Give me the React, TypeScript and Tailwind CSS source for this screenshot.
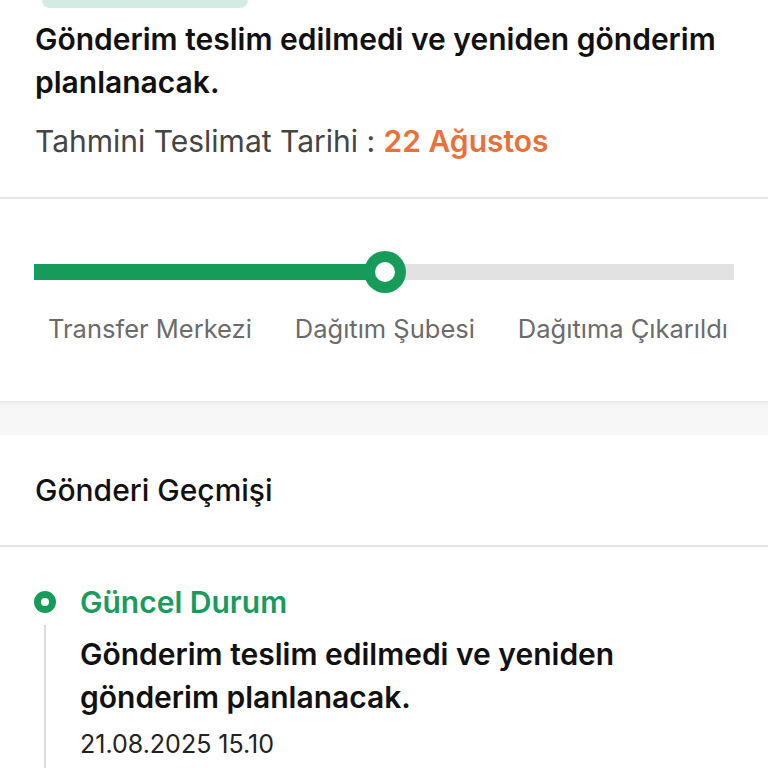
import React from "react";

export default function App() {
  return (
    <div className="w-[768px] h-[768px] overflow-hidden bg-white font-['Inter','Noto_Sans',sans-serif]">
      {/* Top section */}
      <div className="px-[35px] pb-[38px]">
        <div className="ml-[7px] w-[206px] h-[8px] rounded-b-[10px] bg-[#d3ece1]" />
        <h1 className="mt-[10px] text-[30px] leading-[43px] font-semibold text-[#111111]">
          Gönderim teslim edilmedi ve yeniden gönderim planlanacak.
        </h1>
        <p className="mt-[19px] text-[30px] leading-[36px] text-[#444444]">
          Tahmini Teslimat Tarihi :{" "}
          <span className="font-semibold text-[#e8703a]">22 Ağustos</span>
        </p>
      </div>
      <div className="h-[2px] bg-[#e6e6e6]" />

      {/* Progress section */}
      <div className="px-[34px] pt-[52px] h-[202px]">
        <div className="relative w-[700px] h-[42px] flex items-center">
          <div className="w-[350px] h-[16px] bg-[#169c58]" />
          <div className="flex-1 h-[16px] bg-[#e2e2e2]" />
          <div className="absolute left-[330px] top-0 w-[42px] h-[42px] rounded-full bg-[#169c58] flex items-center justify-center">
            <div className="w-[20px] h-[20px] rounded-full bg-white" />
          </div>
        </div>
        <div className="mt-[21px] pl-[14px] pr-[6px] flex justify-between text-[25.5px] leading-[30px] text-[#6b6b6b]">
          <div>Transfer Merkezi</div>
          <div>Dağıtım Şubesi</div>
          <div>Dağıtıma Çıkarıldı</div>
        </div>
      </div>

      {/* Gap */}
      <div className="h-[34px] bg-[#f7f7f7] shadow-[inset_0_7px_6px_-5px_rgba(0,0,0,0.07)]" />

      {/* History card */}
      <div className="bg-white">
        <div className="h-[110px] px-[35px] flex items-center">
          <h2 className="text-[30px] font-medium text-[#111111]">Gönderi Geçmişi</h2>
        </div>
        <div className="h-[2px] bg-[#e3e3e3]" />
        <div className="px-[34px] pt-[38px] flex gap-[24px]">
          <div className="flex flex-col items-center w-[22px] shrink-0">
            <div className="mt-[6px] w-[22px] h-[22px] rounded-full border-[7px] border-[#169c58]" />
            <div className="mt-[12px] w-[2px] h-[200px] bg-[#dcdcdc]" />
          </div>
          <div className="flex-1">
            <div className="text-[30px] leading-[34px] font-semibold text-[#1a9a5c]">Güncel Durum</div>
            <div className="mt-[14px] w-[620px] text-[30px] leading-[43px] font-semibold text-[#111111]">
              Gönderim teslim edilmedi ve yeniden gönderim planlanacak.
            </div>
            <div className="mt-[10px] text-[25px] leading-[30px] text-[#222222]">21.08.2025 15.10</div>
          </div>
        </div>
      </div>
    </div>
  );
}
